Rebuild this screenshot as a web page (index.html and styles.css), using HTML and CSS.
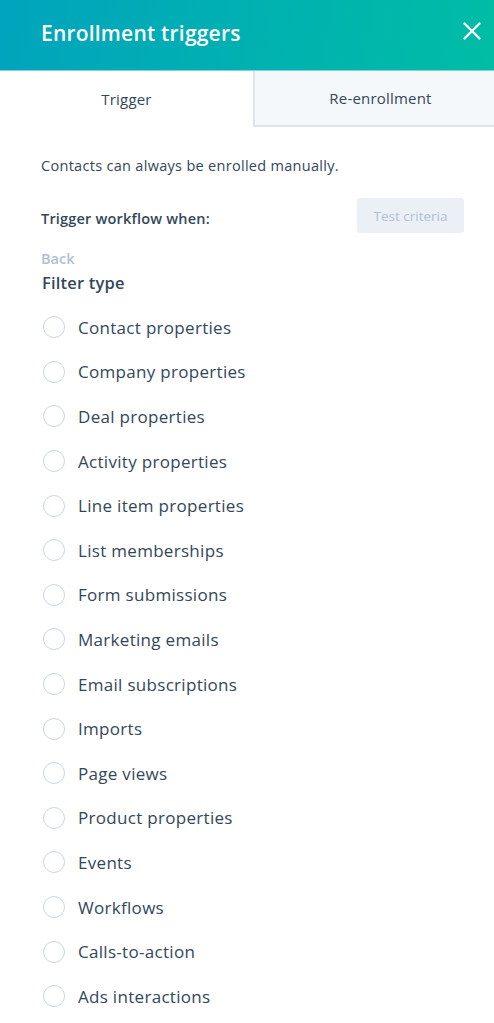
FILE: index.html
```html
<!DOCTYPE html>
<html>
<head>
<meta charset="utf-8">
<link rel="stylesheet" href="styles.css">
</head>
<body>
<div class="panel">
  <header class="header">
    <h1 class="title">Enrollment triggers</h1>
    <button class="close" aria-label="Close">
      <svg width="18" height="18" viewBox="0 0 18 18"><path d="M1.5 1.5 L16.5 16.5 M16.5 1.5 L1.5 16.5" stroke="#fff" stroke-width="2.4" stroke-linecap="round"/></svg>
    </button>
  </header>
  <nav class="tabs">
    <div class="tab active">Trigger</div>
    <div class="tab inactive">Re-enrollment</div>
  </nav>
  <main class="content">
    <p class="note">Contacts can always be enrolled manually.</p>
    <div class="trigger-row">
      <span class="trigger-label">Trigger workflow when:</span>
      <button class="test-btn">Test criteria</button>
    </div>
    <div class="back">Back</div>
    <h2 class="filter-title">Filter type</h2>
    <ul class="options">
      <li class="option"><span class="radio"></span>Contact properties</li>
      <li class="option"><span class="radio"></span>Company properties</li>
      <li class="option"><span class="radio"></span>Deal properties</li>
      <li class="option"><span class="radio"></span>Activity properties</li>
      <li class="option"><span class="radio"></span>Line item properties</li>
      <li class="option"><span class="radio"></span>List memberships</li>
      <li class="option"><span class="radio"></span>Form submissions</li>
      <li class="option"><span class="radio"></span>Marketing emails</li>
      <li class="option"><span class="radio"></span>Email subscriptions</li>
      <li class="option"><span class="radio"></span>Imports</li>
      <li class="option"><span class="radio"></span>Page views</li>
      <li class="option"><span class="radio"></span>Product properties</li>
      <li class="option"><span class="radio"></span>Events</li>
      <li class="option"><span class="radio"></span>Workflows</li>
      <li class="option"><span class="radio"></span>Calls-to-action</li>
      <li class="option"><span class="radio"></span>Ads interactions</li>
    </ul>
  </main>
</div>
</body>
</html>
```
FILE: styles.css
```css
* { box-sizing: border-box; }
html, body { margin: 0; padding: 0; background: #fff; }
body { font-family: "Open Sans", "Noto Sans", sans-serif; color: #33475b; }
.panel { width: 494px; }
.header {
  height: 71px;
  background: linear-gradient(100deg, #00a4bd 0%, #00bda5 100%);
  display: flex;
  align-items: center;
  justify-content: space-between;
  padding: 0 12px 4px 41px;
  border-bottom: 1px solid #7fd1d6;
}
.title { margin: 0; color: #fff; font-size: 21px; font-weight: 600; line-height: 28px; letter-spacing: 0.2px; }
.close { background: none; border: 0; padding: 0; width: 20px; height: 20px; display: flex; align-items: center; justify-content: center; margin-top: -4px; }
.tabs { display: flex; height: 56px; }
.tab { display: flex; align-items: center; justify-content: center; font-size: 15px; color: #33475b; letter-spacing: 0.2px; }
.tab.active { width: 253px; background: #fff; }
.tab.inactive { flex: 1; background: #f5f8fa; border-left: 2px solid #dfe3eb; border-bottom: 2px solid #dfe3eb; padding-left: 12px; }
.content { padding: 29px 30px 0 41px; }
.note { margin: 0; font-size: 14.5px; line-height: 20px; letter-spacing: 0.3px; }
.trigger-row { display: flex; justify-content: space-between; align-items: center; margin-top: 22px; }
.trigger-label { font-size: 14.5px; font-weight: 600; margin-top: 6px; letter-spacing: 0.2px; }
.test-btn {
  width: 107px; height: 35px; border: 0; border-radius: 3px;
  background: #eaf0f6; color: #b0c1d4; font-family: "Open Sans", "Noto Sans", sans-serif; font-size: 13.5px;
}
.back { margin-top: 16px; font-size: 14.5px; font-weight: 600; color: #b0c1d4; line-height: 20px; }
.filter-title { margin: 2px 0 0 1px; font-size: 16.5px; font-weight: 600; line-height: 24px; letter-spacing: 0.2px; }
.options { list-style: none; margin: 10px 0 0 0; padding: 0; }
.option { display: flex; align-items: center; height: 44.6px; font-size: 17px; letter-spacing: 0.3px; }
.radio {
  width: 22px; height: 22px; border-radius: 50%; border: 1.5px solid #cbd6e2; background: #fff;
  margin: 0 13px 0 2px; flex: none;
}
```
